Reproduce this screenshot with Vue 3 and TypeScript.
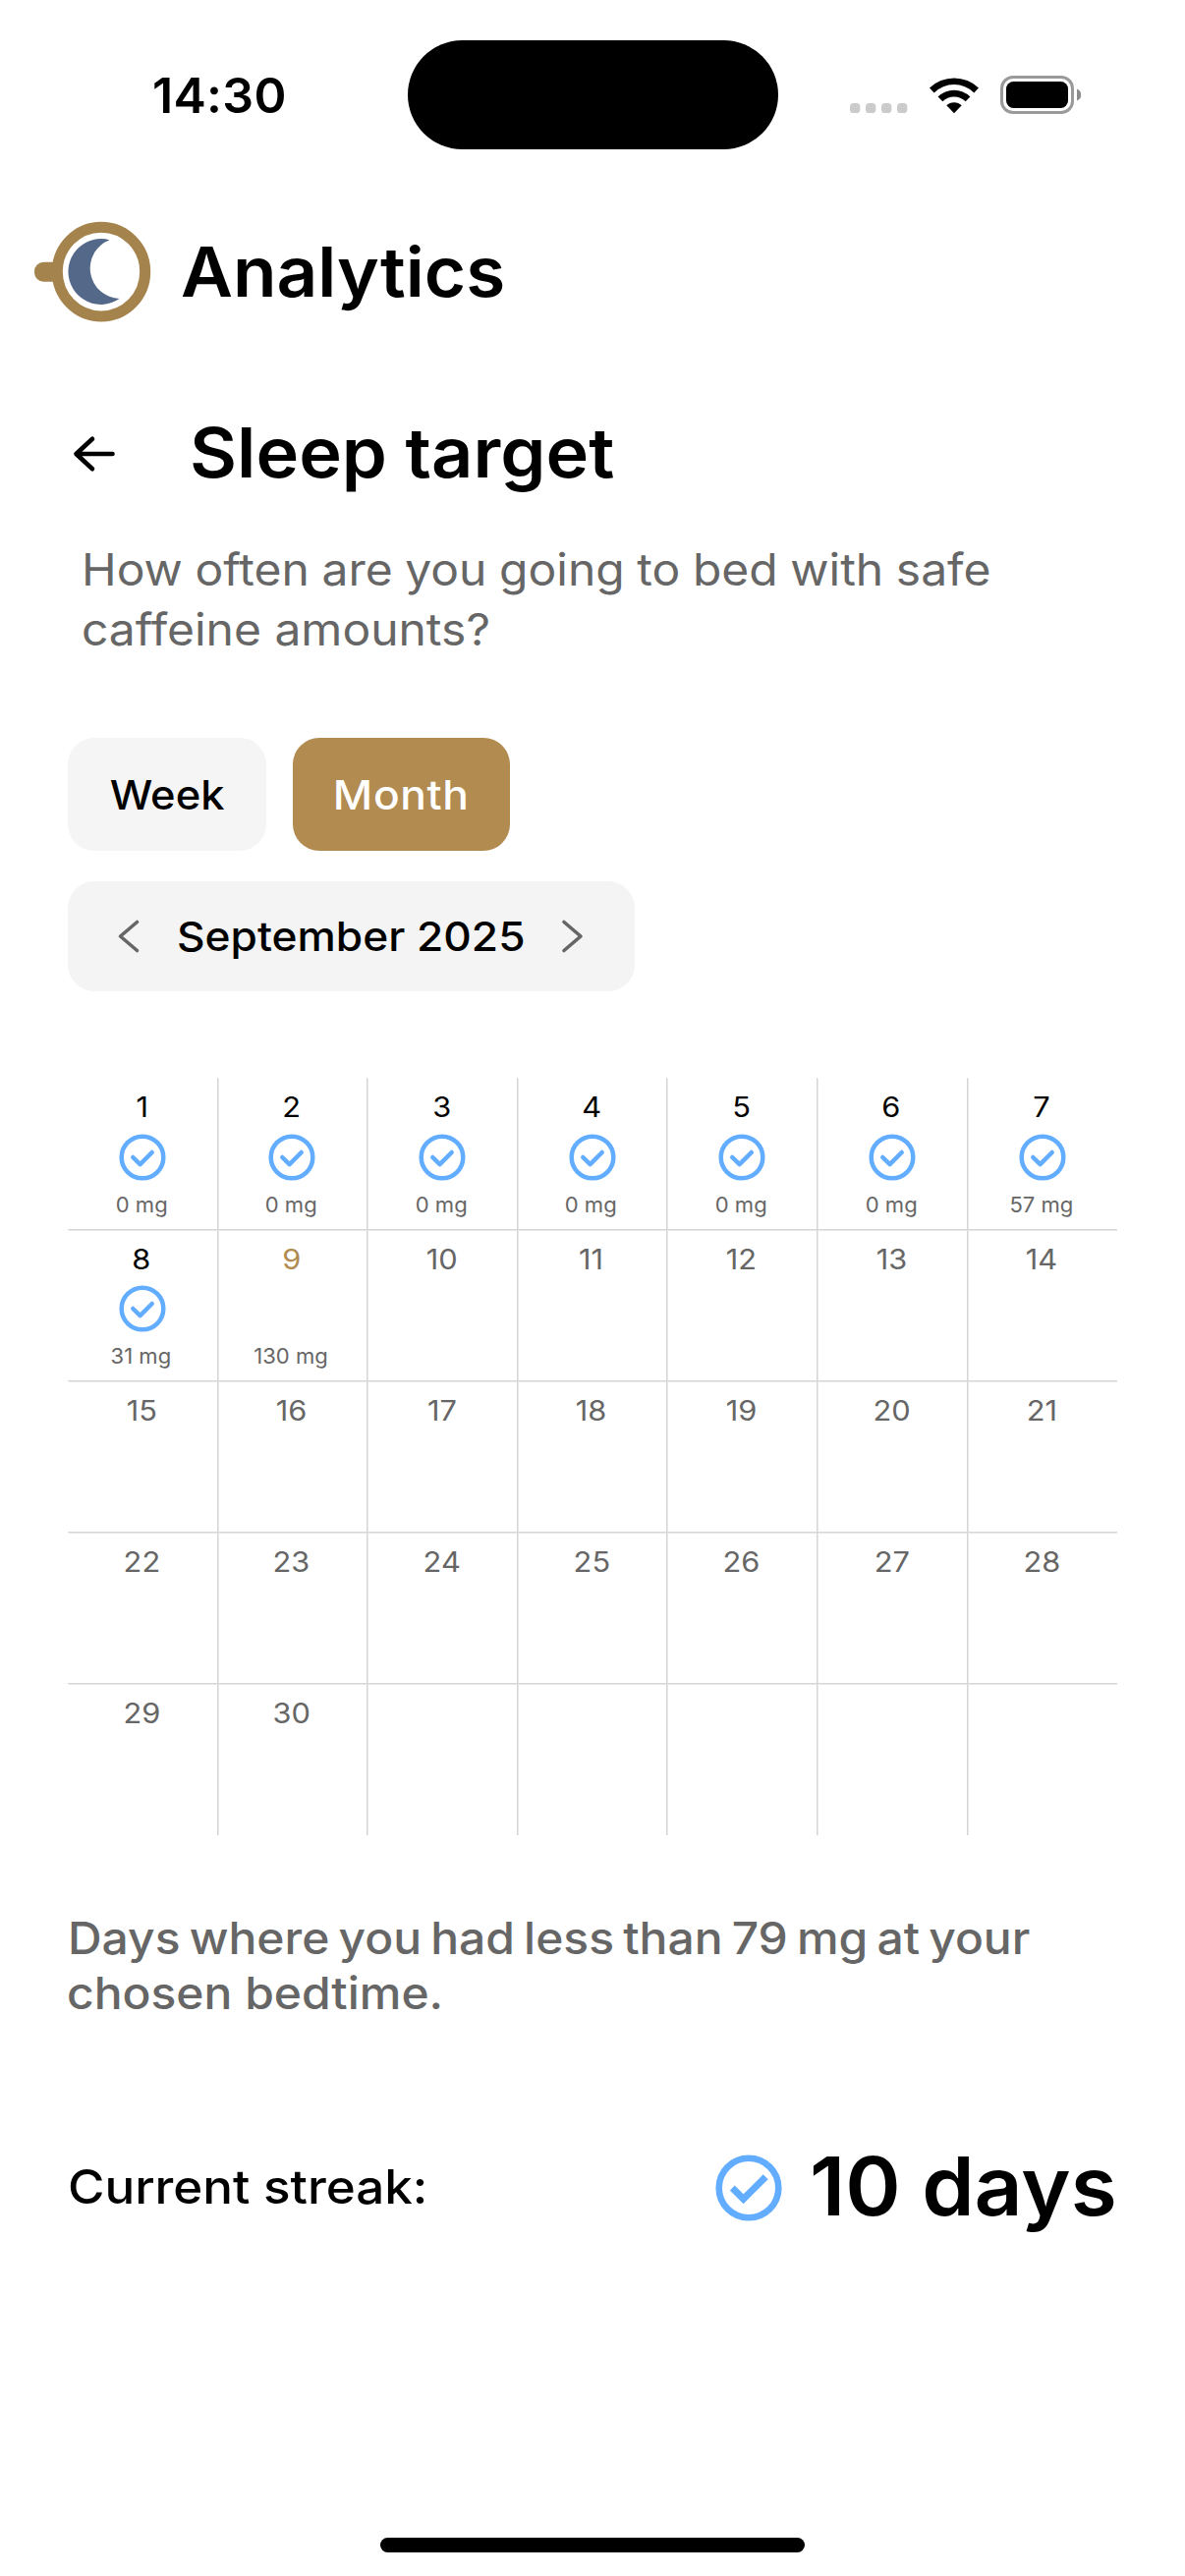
<script setup lang="ts">
import { ref } from 'vue'

type DayState = 'past' | 'today' | 'future' | 'empty'

interface DayCell {
  label: string
  state: DayState
  reached: boolean
  amount: string
}

const amounts: Record<number, number> = { 1: 0, 2: 0, 3: 0, 4: 0, 5: 0, 6: 0, 7: 57, 8: 31, 9: 130 }
const limit = 79
const today = 9

const cells: DayCell[] = Array.from({ length: 35 }, (_, i) => {
  const day = i + 1
  if (day > 30) return { label: '', state: 'empty', reached: false, amount: '' }
  const mg = amounts[day]
  return {
    label: String(day),
    state: day < today ? 'past' : day === today ? 'today' : 'future',
    reached: mg !== undefined && mg < limit,
    amount: mg === undefined ? '' : `${mg} mg`,
  }
})

const range = ref<'Week' | 'Month'>('Month')
const ranges = ['Week', 'Month'] as const
</script>

<template>
  <main class="screen">
    <div class="status">
      <div class="time">14:30</div>
      <div class="island"></div>
      <div class="indicators">
        <svg class="dots" width="60" height="10" viewBox="0 0 60 10">
          <rect v-for="n in 4" :key="n" :x="(n - 1) * 16" y="0" width="10.3" height="10" rx="3.6" fill="#cbcbcb" />
        </svg>
        <svg class="wifi" width="52" height="38" viewBox="0 0 52 38">
          <path d="M1 11.5A36 36 0 0 1 51 11.5L46.3 16.4A29 29 0 0 0 5.7 16.4Z" />
          <path d="M9.6 20.4A23.5 23.5 0 0 1 42.4 20.4L37.7 25.2A16.8 16.8 0 0 0 14.3 25.2Z" />
          <path d="M18.3 29.3A11 11 0 0 1 33.7 29.3L26 37.2Z" />
        </svg>
        <svg class="battery" width="83" height="40" viewBox="0 0 83 40">
          <rect x="1.5" y="1.5" width="72" height="36" rx="11.5" fill="none" stroke="#9a9a9a" stroke-width="3" />
          <rect x="6" y="6" width="63" height="27" rx="7.5" />
          <path d="M78 13.5A6.4 6.4 0 0 1 78 25.5Z" fill="#8c8c8c" />
        </svg>
      </div>
    </div>

    <header class="brand">
      <svg width="119" height="104" viewBox="35 225 119 104">
        <rect x="35" y="266.8" width="34" height="20" rx="9.5" fill="#a5834c" />
        <ellipse cx="103" cy="276.6" rx="44.7" ry="45.4" fill="#fff" stroke="#a5834c" stroke-width="11" />
        <path d="M111.5 244.3A33.2 33.4 0 1 0 121.5 304A30.9 30.9 0 0 1 111.5 244.3Z" fill="#54698a" />
      </svg>
      <h1>Analytics</h1>
    </header>

    <div class="title">
      <svg width="46" height="46" viewBox="0 0 46 46" fill="none" stroke="#000" stroke-width="4.6" stroke-linecap="round" stroke-linejoin="round">
        <path d="M41.5 23H4.5M21 7.7L4.5 23L21 38.3" />
      </svg>
      <h2>Sleep target</h2>
    </div>

    <p class="question">
      <span>How often are you going to bed with safe</span>
      <span>caffeine amounts?</span>
    </p>

    <div class="ranges">
      <button v-for="r in ranges" :key="r" :class="['range', r.toLowerCase(), { active: range === r }]" @click="range = r"><span>{{ r }}</span></button>
    </div>

    <div class="period">
      <svg width="24" height="38" viewBox="0 0 24 38" class="chev"><path d="M20.5 4.5L3.5 19L20.5 33.5" /></svg>
      <span>September 2025</span>
      <svg width="24" height="38" viewBox="0 0 24 38" class="chev"><path d="M3 4.5L20 19L3 33.5" /></svg>
    </div>

    <section class="calendar">
      <div v-for="(c, i) in cells" :key="i" class="cell">
        <div :class="['day', c.state]">{{ c.label }}</div>
        <div class="mark">
          <svg v-if="c.reached" width="48" height="48" viewBox="0 0 48 48" fill="none" stroke="#62adff" stroke-width="4.5" stroke-linecap="round" stroke-linejoin="round">
            <circle cx="24" cy="24" r="21.3" />
            <path d="M14.3 24L21.6 31.2L33.7 19" />
          </svg>
        </div>
        <div class="amount">{{ c.amount }}</div>
      </div>
    </section>

    <p class="note">
      <span>Days where you had less than 79 mg at your</span>
      <span>chosen bedtime.</span>
    </p>

    <div class="streak">
      <div class="label"><span>Current streak:</span></div>
      <svg width="68" height="68" viewBox="0 0 68 68" fill="none" stroke="#62adff" stroke-width="6.6">
        <circle cx="34" cy="34" r="30.3" />
        <path d="M17.3 34L28.6 45.2L51.2 22.8" stroke-width="7" stroke-linejoin="miter" />
      </svg>
      <strong>10 days</strong>
    </div>

    <div class="home"></div>
  </main>
</template>

<style>
html,
body {
  margin: 0;
  background: #fff;
}
</style>

<style scoped>
.screen {
  width: 1206px;
  height: 2622px;
  box-sizing: border-box;
  display: flex;
  flex-direction: column;
  background: #fff;
  color: #000;
  font-family: Inter, 'Liberation Sans', sans-serif;
  overflow: hidden;
}
.status {
  display: flex;
  align-items: center;
  height: 111px;
  padding: 41px 0 0 155px;
}
.time {
  width: 260px;
  font-size: 50px;
  font-weight: 600;
  line-height: 60px;
  letter-spacing: 0.3px;
  margin-top: 1px;
}
.island {
  width: 376.5px;
  height: 111px;
  border-radius: 56px;
  background: #000;
}
.indicators {
  display: flex;
  margin: 1px 0 0 73.5px;
  align-items: center;
}
.dots {
  margin-top: 26px;
}
.wifi {
  margin-left: 20px;
}
.battery {
  margin-left: 21px;
}
.brand {
  display: flex;
  align-items: center;
  height: 104px;
  margin: 73px 0 0 35px;
}
h1,
h2 {
  margin: 0;
  font-size: 70px;
  font-weight: 600;
  line-height: 84px;
  white-space: nowrap;
  transform-origin: 0 50%;
}
h1 {
  margin: -1px 0 0 30px;
  transform: scaleX(1.04);
}
.title {
  display: flex;
  align-items: center;
  height: 84px;
  margin: 90px 0 0 72.5px;
}
.title svg {
  margin-top: 2px;
}
h2 {
  margin-left: 74.5px;
  transform: scaleX(1.056);
}
.question,
.note {
  margin: 45.5px 0 0 82.5px;
  font-size: 45px;
  line-height: 61.7px;
  color: #666;
  white-space: nowrap;
}
.question span,
.note span {
  display: block;
  width: max-content;
  transform: scaleX(1.066);
  transform-origin: 0 50%;
}
.question span:first-child {
  word-spacing: -0.8px;
}
.ranges {
  display: flex;
  gap: 27px;
  margin: 79.5px 0 0 69px;
}
.range {
  width: 202px;
  height: 115px;
  padding: 0;
  border: 0;
  border-radius: 27px;
  background: #f5f5f5;
  color: #000;
  font: 500 41px/50px Inter, 'Liberation Sans', sans-serif;
}
.range span {
  display: inline-block;
  transform: scaleX(1.06);
}
.range.month {
  width: 221px;
}
.range.month span {
  letter-spacing: 0.6px;
  transform: scaleX(1.08);
}
.range.active {
  background: #b18b50;
  color: #fff;
}
.period {
  display: flex;
  align-items: center;
  width: 577px;
  height: 112px;
  margin: 31px 0 0 69px;
  border-radius: 27px;
  background: #f4f4f4;
  font-size: 41px;
  font-weight: 500;
  white-space: nowrap;
}
.period span {
  width: 356px;
  margin: 0 0 0 37px;
  transform: scaleX(1.079);
  transform-origin: 0 50%;
}
.chev {
  fill: none;
  stroke: #666;
  stroke-width: 3.6;
  stroke-linecap: round;
  stroke-linejoin: round;
}
.chev:first-child {
  margin-left: 49.5px;
}
.chev:last-child {
  margin-left: 35px;
}
.calendar {
  display: grid;
  grid-template-columns: repeat(7, 152.6px);
  grid-auto-rows: 154.2px;
  margin: 88px 0 0 69px;
}
.cell {
  display: flex;
  flex-direction: column;
  align-items: center;
  box-sizing: border-box;
  border-right: 1px solid #d6d6d6;
  border-bottom: 1px solid #d6d6d6;
  box-shadow: 1px 1px 0 #e8e8e8;
}
.cell:nth-child(7n) {
  border-right: 0;
  box-shadow: 0 1px 0 #e8e8e8;
}
.cell:nth-child(n + 29) {
  border-bottom: 0;
  box-shadow: 1px 0 0 #e8e8e8;
}
.cell:nth-child(35) {
  box-shadow: none;
}
.day {
  height: 34px;
  margin: 13px 0 0 -1px;
  font-size: 28.5px;
  line-height: 34px;
  transform: scaleX(1.08);
}
.day.past {
  color: #000;
}
.day.today {
  color: #b18b50;
}
.day.future {
  color: #666;
}
.mark {
  width: 48px;
  height: 48px;
  margin-top: 9.5px;
}
.amount {
  height: 26px;
  margin: 12px 0 0 -2px;
  font-size: 21px;
  line-height: 26px;
  transform: scaleX(1.05);
  color: #666;
}
.note {
  margin: 77px 0 0 69px;
  font-weight: 500;
  line-height: 55.7px;
}
.note span:first-child {
  word-spacing: -3.4px;
}
.note span:last-child {
  margin-left: -1px;
}
.streak {
  display: flex;
  align-items: center;
  height: 100px;
  margin: 120px 0 0 69px;
}
.label {
  width: 659px;
  margin-top: -2px;
  font-size: 48px;
  font-weight: 500;
}
.label span {
  display: inline-block;
  transform: scaleX(1.064);
  transform-origin: 0 50%;
}
strong {
  margin: -3px 0 0 28px;
  font-size: 83px;
  font-weight: 600;
  line-height: 100px;
  white-space: nowrap;
  transform: scaleX(1.031);
  transform-origin: 0 50%;
}
.home {
  width: 432px;
  height: 15px;
  margin: auto auto 24px 387px;
  border-radius: 8px;
  background: #000;
}
</style>
